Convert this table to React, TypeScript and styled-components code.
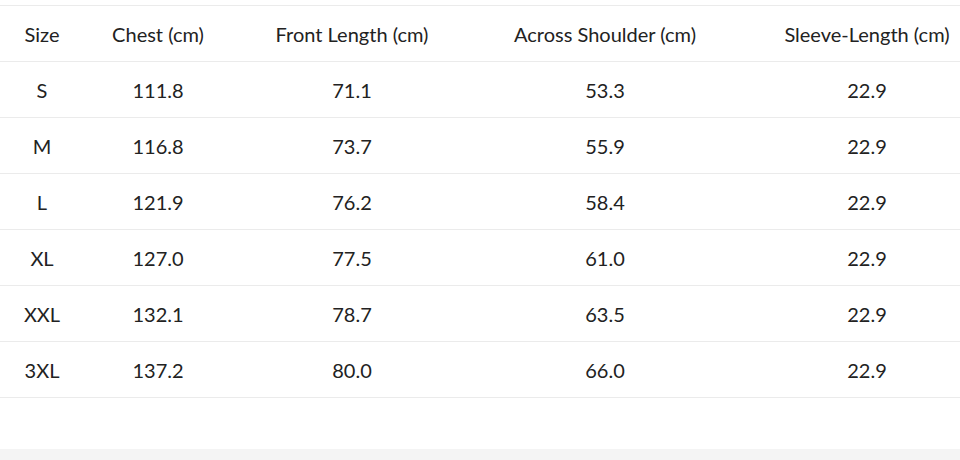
import React from "react";
import styled, { createGlobalStyle } from "styled-components";

const Global = createGlobalStyle`
  html, body { margin: 0; padding: 0; background: #f4f4f4; }
  body { overflow: hidden; font-family: "Lato", "Open Sans", sans-serif; }
`;

const Panel = styled.div`
  background: #ffffff;
  height: 449px;
  padding-top: 5px;
  box-sizing: border-box;
  overflow: hidden;
`;

const Table = styled.table`
  border-collapse: collapse;
  table-layout: fixed;
  width: 996px;
  color: #222222;
  font-size: 20px;
`;

const Row = styled.tr`
  height: 56px;
  border-top: 1px solid #ebebeb;
  border-bottom: 1px solid #ebebeb;
`;

const Cell = styled.td`
  text-align: center;
  vertical-align: middle;
  padding: 0;
  white-space: nowrap;
`;

const HeadCell = styled.th`
  text-align: center;
  vertical-align: middle;
  padding: 0;
  font-weight: 400;
  white-space: nowrap;
`;

const widths = [84, 148, 240, 266, 258];
const headers = ["Size", "Chest (cm)", "Front Length (cm)", "Across Shoulder (cm)", "Sleeve-Length (cm)"];
const rows = [
  ["S", "111.8", "71.1", "53.3", "22.9"],
  ["M", "116.8", "73.7", "55.9", "22.9"],
  ["L", "121.9", "76.2", "58.4", "22.9"],
  ["XL", "127.0", "77.5", "61.0", "22.9"],
  ["XXL", "132.1", "78.7", "63.5", "22.9"],
  ["3XL", "137.2", "80.0", "66.0", "22.9"],
];

export default function App() {
  return (
    <>
      <Global />
      <Panel>
        <Table>
          <colgroup>
            {widths.map((w, i) => (
              <col key={i} style={{ width: w }} />
            ))}
          </colgroup>
          <thead>
            <Row>
              {headers.map((h) => (
                <HeadCell key={h}>{h}</HeadCell>
              ))}
            </Row>
          </thead>
          <tbody>
            {rows.map((r) => (
              <Row key={r[0]}>
                {r.map((c, i) => (
                  <Cell key={i}>{c}</Cell>
                ))}
              </Row>
            ))}
          </tbody>
        </Table>
      </Panel>
    </>
  );
}
